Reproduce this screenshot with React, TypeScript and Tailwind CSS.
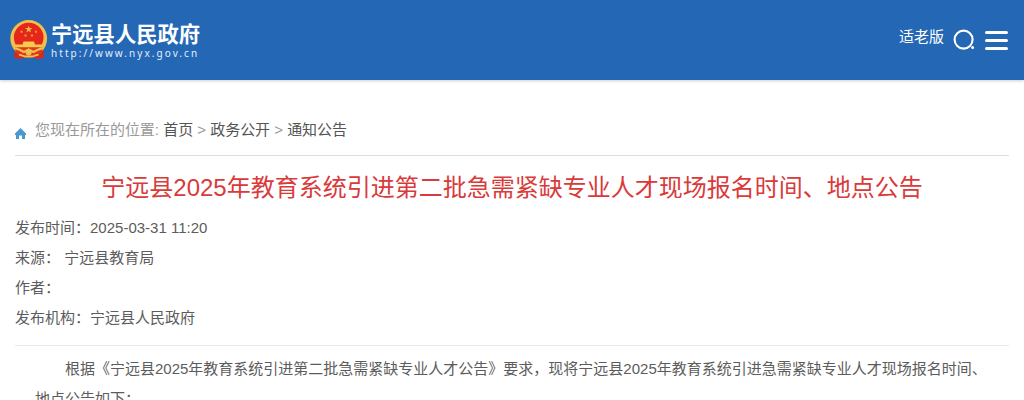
const links = ["首页", "政务公开", "通知公告"];

const meta = [
  { label: "发布时间：", value: "2025-03-31 11:20" },
  { label: "来源：", value: " 宁远县教育局" },
  { label: "作者：", value: "" },
  { label: "发布机构：", value: "宁远县人民政府" },
];

function Emblem() {
  return (
    <svg width="38" height="40" viewBox="0 0 38 40" className="shrink-0">
      <path d="M5 29L4 37.500L10 39L15 37.500H23L28 39L34 37.500L33 29Z" fill="#d8281c" />
      <circle cx="18.700" cy="18.500" r="18.400" fill="#f1bf4c" />
      <circle cx="18.700" cy="17.500" r="14.800" fill="#e4261b" />
      <path
        d="M18.700 5.500l.9 2.600h2.800l-2.200 1.700.8 2.700-2.300-1.600-2.300 1.600.8-2.700-2.200-1.700h2.800z"
        fill="#f5b544"
      />
      <g fill="#ee8a38">
        <circle cx="11.500" cy="11.800" r="1.200" />
        <circle cx="26" cy="11.800" r="1.200" />
        <circle cx="15.500" cy="15.500" r="1.200" />
        <circle cx="22" cy="15.500" r="1.200" />
      </g>
      <path d="M13.500 21.500h10.500l1 3h7l-1 3H6.500l-1-3h7z" fill="#f6c94f" />
      <path d="M4.500 27.500h28.500l-1.500 5.500-5 4h-15.500l-5-4z" fill="#e0361f" />
      <path
        d="M4 28c4 1 7 2 10 4l4.700-2.500 4.700 2.500c3-2 6-3 10-4"
        fill="none"
        stroke="#f1bf4c"
        strokeWidth="2.200"
      />
      <circle cx="18.700" cy="32.500" r="3" fill="#f1bf4c" />
      <path d="M9 35c3-.5 4 1.500 6 1.500h7.500c2 0 3-2 6-1.500" fill="none" stroke="#f1bf4c" strokeWidth="1.800" />
    </svg>
  );
}

function Header() {
  return (
    <header className="flex h-20 justify-between bg-[#2367b5] pr-4 pl-2.5 text-white shadow-[0_1px_3px_rgba(0,0,0,0.2)]">
      <div className="flex pt-5">
        <Emblem />
        <div className="pt-[3px] pl-[3px]">
          <div className="text-[21.3px] leading-[25px] font-bold">宁远县人民政府</div>
          <div className="font-['Noto_Sans'] text-[10px] leading-[11px] tracking-[2.05px] text-[#e4eefa]">
            http://www.nyx.gov.cn
          </div>
        </div>
      </div>
      <div className="flex">
        <a className="pt-[22px] leading-[30px]">适老版</a>
        <svg width="22" height="22" viewBox="0 0 22 22" className="mt-[29px] ml-[9px]">
          <circle cx="10.600" cy="10.600" r="9" fill="none" stroke="white" strokeWidth="2.100" />
          <circle cx="19.600" cy="18.600" r="1.500" fill="white" />
        </svg>
        <div className="mt-[31px] ml-[10px] flex w-[23px] flex-col gap-[5px]">
          <span className="h-[3px] rounded-sm bg-white" />
          <span className="h-[3px] rounded-sm bg-white" />
          <span className="h-[3px] rounded-sm bg-white" />
        </div>
      </div>
    </header>
  );
}

function Breadcrumb() {
  return (
    <nav className="flex h-[41px] border-b border-[#ddd] leading-[30px] text-[#999]">
      <svg width="11" height="11" viewBox="0 0 11 11" className="mt-[13px] mr-[9px]">
        <path d="M5.500 0L11 5.500V7H10V11H7V7.500H4V11H1V7H0V5.500Z" fill="#4a98cc" />
      </svg>
      <div className="-ml-px pl-px tracking-[-0.02px]">
        您现在所在的位置:{" "}
        {links.map((link, i) => (
          <span key={link}>
            {i > 0 && " > "}
            <a className="text-[#555]">{link}</a>
          </span>
        ))}
      </div>
    </nav>
  );
}

export default function App() {
  return (
    <div className="h-[400px] overflow-hidden bg-white font-['Liberation_Sans','Noto_Sans_CJK_SC',sans-serif] text-[15px] text-[#5c5c5c]">
      <Header />
      <main className="px-[15px] pt-[35px]">
        <Breadcrumb />
        <h1 className="pt-[14px] pb-[7px] text-center text-2xl leading-9 text-[#d93a3a]">
          宁远县2025年教育系统引进第二批急需紧缺专业人才现场报名时间、地点公告
        </h1>
        <div className="h-[133px] border-b border-[#eaeaea]">
          {meta.map((item) => (
            <p key={item.label} className="h-[30px] leading-[30px] whitespace-pre">
              {item.label}
              {item.value}
            </p>
          ))}
        </div>
        <article className="px-5 pt-2">
          <p className="indent-[2em] leading-[30px]">
            根据《宁远县2025年教育系统引进第二批急需紧缺专业人才公告》要求，现将宁远县2025年教育系统引进急需紧缺专业人才现场报名时间、地点公告如下：
          </p>
        </article>
      </main>
    </div>
  );
}
